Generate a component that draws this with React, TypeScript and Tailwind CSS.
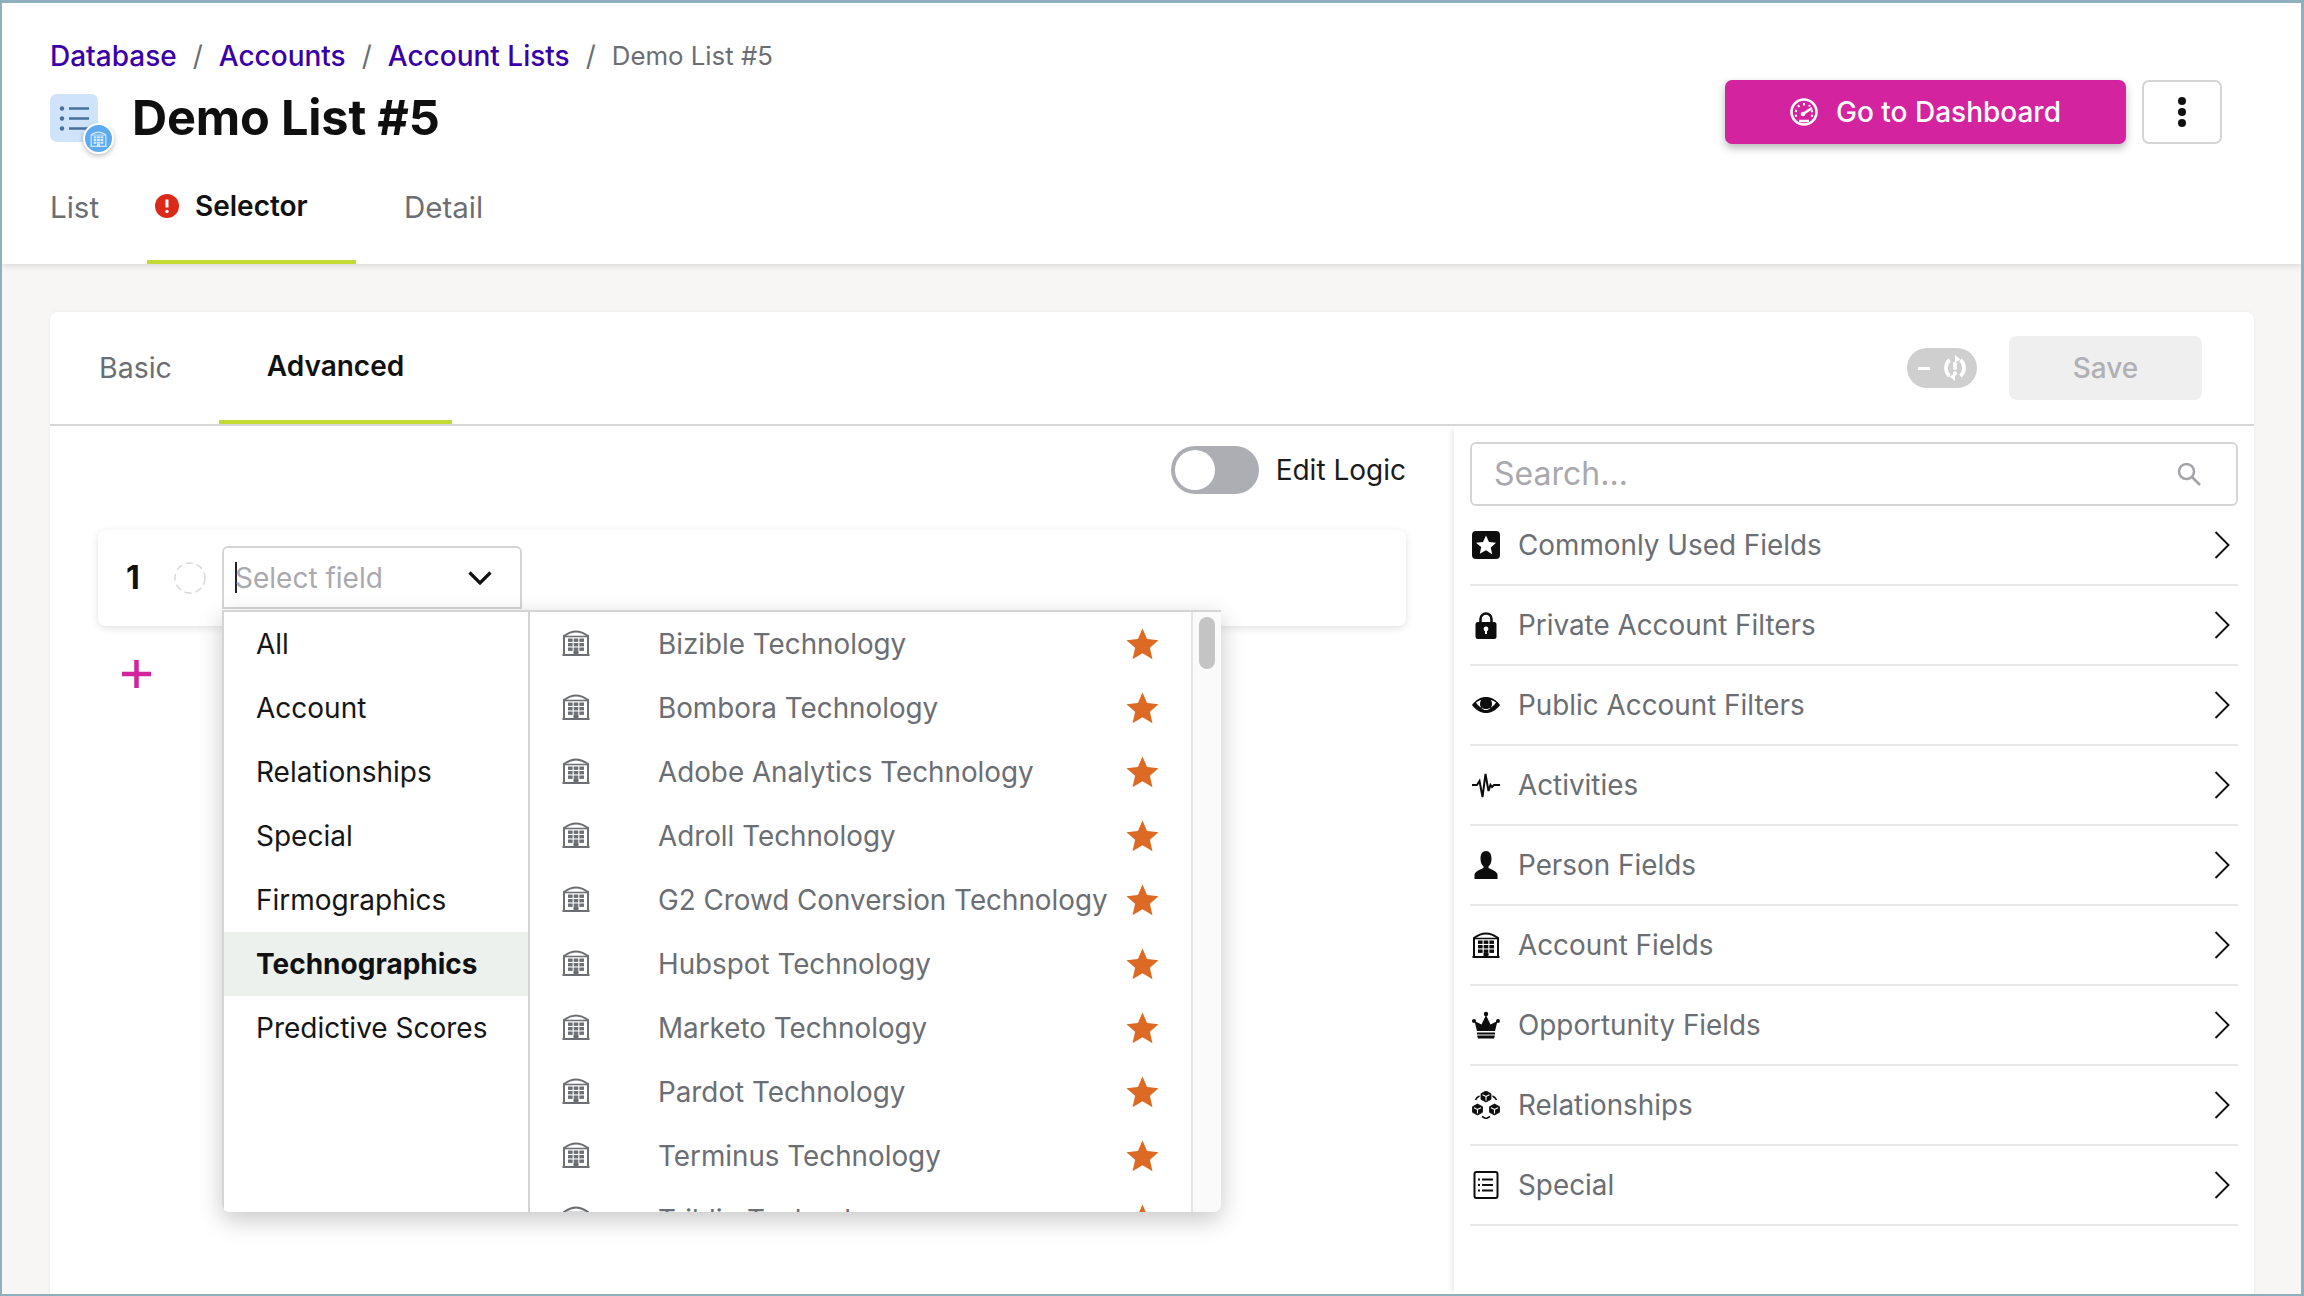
import React from "react";

const Building = ({ className = "" }: { className?: string }) => (
  <svg viewBox="0 0 28 26" className={className} fill="none">
    <path d="M2 25V6C6 3 10 1.500 14 1.500S22 3 26 6V25" stroke="currentColor" strokeWidth="2" />
    <path d="M0.500 25h27" stroke="currentColor" strokeWidth="2" />
    <path d="M2 6.500h24" stroke="currentColor" strokeWidth="1.500" />
    {[8.500, 13, 17.500].map((y) =>
      [6, 11.700, 17.400].map((x) => <rect key={`${x}-${y}`} x={x} y={y} width="4.600" height="3.400" fill="currentColor" />)
    )}
    <rect x="11.500" y="21" width="5" height="4" fill="currentColor" />
  </svg>
);

const Star = () => (
  <svg viewBox="0 0 33 32" className="w-[33px] h-[32px] text-[#dc6a24]" fill="currentColor">
    <path d="M16.500 0.500l4.600 10.600 11.400 1.100-8.600 7.600 2.600 11.400-10-6-10 6 2.600-11.400L0.500 12.200l11.400-1.100z" />
  </svg>
);

const Chevron = () => (
  <svg viewBox="0 0 16 28" className="w-[16px] h-[28px]" fill="none" stroke="#111" strokeWidth="1.900">
    <path d="M1.500 1l13 13-13 13" />
  </svg>
);

const icons: Record<string, React.ReactNode> = {
  star: (
    <svg viewBox="0 0 28 28" className="w-[28px] h-[28px]">
      <rect width="28" height="28" rx="4" fill="#0d0d0d" />
      <path d="M14 4.500l3 6.400 7 .8-5.200 4.700 1.400 6.900L14 19.200l-6.200 3.600 1.400-6.900L4 11.700l7-.8z" fill="#fff" />
    </svg>
  ),
  lock: (
    <svg viewBox="0 0 28 28" className="w-[28px] h-[28px]">
      <path d="M8.500 13V8a5.500 5.500 0 0 1 11 0v5" fill="none" stroke="#0d0d0d" strokeWidth="2.600" />
      <rect x="3.500" y="11" width="21" height="17" rx="2.500" fill="#0d0d0d" />
      <circle cx="14" cy="18" r="2.400" fill="#fff" />
      <rect x="13" y="18" width="2" height="5" fill="#fff" />
    </svg>
  ),
  eye: (
    <svg viewBox="0 0 28 28" className="w-[28px] h-[28px]">
      <path d="M0 14C4 8.500 9 6 14 6s10 2.500 14 8c-4 5.500-9 8-14 8S4 19.500 0 14z" fill="#0d0d0d" />
      <path d="M4 11.500C7 9.500 9 9 9 9c-.7 1.300-1 2.800-1 4 0 3.300 2.700 6 6 6s6-2.700 6-6c0-1.200-.3-2.700-1-4 0 0 2 .5 5 2.500-2.500 4-6.500 6.500-10 6.500S6.500 15.500 4 11.500z" fill="#fff" />
    </svg>
  ),
  pulse: (
    <svg viewBox="0 0 28 28" className="w-[28px] h-[28px]" fill="none" stroke="#0d0d0d" strokeWidth="2">
      <path d="M0 14h5l2.500-4 3 16 3-23 3 17 2-6 1.500 2 2-2H28" />
    </svg>
  ),
  person: (
    <svg viewBox="0 0 28 28" className="w-[28px] h-[28px]">
      <path d="M14 0c3.500 0 5.500 3 5.500 7.500 0 3.500-1 6.500-3 8v1.500c3 1.500 8 3 9 6.500V28h-23v-4.500c1-3.500 6-5 9-6.500v-1.500c-2-1.500-3-4.500-3-8C8.500 3 10.500 0 14 0z" fill="#0d0d0d" />
    </svg>
  ),
  building: <Building className="w-[28px] h-[26px] text-[#0d0d0d]" />,
  crown: (
    <svg viewBox="0 0 28 28" className="w-[28px] h-[28px]" fill="#0d0d0d">
      <circle cx="14" cy="3" r="2.200" />
      <circle cx="2" cy="10" r="2" />
      <circle cx="26" cy="10" r="2" />
      <path d="M14 4l4.500 9.500L25.500 10 23 20H5L2.500 10l7 3.500z" />
      <rect x="5" y="21.500" width="18" height="2" />
      <path d="M5 24.500h18l-1 3H6z" />
    </svg>
  ),
  cubes: (
    <svg viewBox="0 0 28 28" className="w-[28px] h-[28px]" fill="none" stroke="#0d0d0d" strokeWidth="2">
      {[
        [14, 5.500],
        [5.500, 18.500],
        [22.500, 18.500],
      ].map(([x, y]) => (
        <g key={x}>
          <path d={`M${x} ${y - 5.500}l5 2.700v5.600l-5 2.700-5-2.700v-5.600z`} fill="#0d0d0d" stroke="#0d0d0d" strokeWidth="0.800" />
          <path d={`M${x - 3.500} ${y - 1.800}l3.500 1.800 3.500-1.800M${x} ${y}v4`} stroke="#fff" strokeWidth="1.100" />
        </g>
      ))}
      <path d="M20.500 5c2 .8 3.200 2 4 4M7.500 5C5.500 5.800 4.300 7 3.500 9M10 25.500l4 2.200 4-2.200" strokeWidth="1.600" />
    </svg>
  ),
  list: (
    <svg viewBox="0 0 28 28" className="w-[28px] h-[28px]" fill="none" stroke="#0d0d0d">
      <rect x="2.500" y="1" width="23" height="26" rx="2" strokeWidth="2" />
      <path d="M10 8.500h11M10 14h11M10 19.500h11" strokeWidth="2" />
      <path d="M6 8.500h2M6 14h2M6 19.500h2" strokeWidth="2" />
    </svg>
  ),
};

const rows = [
  ["star", "Commonly Used Fields"],
  ["lock", "Private Account Filters"],
  ["eye", "Public Account Filters"],
  ["pulse", "Activities"],
  ["person", "Person Fields"],
  ["building", "Account Fields"],
  ["crown", "Opportunity Fields"],
  ["cubes", "Relationships"],
  ["list", "Special"],
];

const categories = ["All", "Account", "Relationships", "Special", "Firmographics", "Technographics", "Predictive Scores"];
const techs = [
  "Bizible Technology",
  "Bombora Technology",
  "Adobe Analytics Technology",
  "Adroll Technology",
  "G2 Crowd Conversion Technology",
  "Hubspot Technology",
  "Marketo Technology",
  "Pardot Technology",
  "Terminus Technology",
  "Triblio Technology",
];

const Sep = () => <span className="mx-[16px] text-[#6b6e72] font-normal">/</span>;

export default function App() {
  return (
    <div className="w-[2304px] h-[1296px] overflow-hidden flex flex-col bg-[#f7f6f4] border-t-[3px] border-l-[2px] border-r-[3px] border-b-[2px] border-[#8fb0bd] font-['Inter',sans-serif] text-[28px]">
      <header className="h-[261px] shrink-0 bg-white shadow-[0_2px_6px_rgba(0,0,0,0.12)] pl-[48px] pr-[79px] flex justify-between relative z-10">
        <div className="flex flex-col">
          <nav className="flex items-center h-[34px] mt-[36px] text-[28px] leading-[34px] font-medium">
            <span className="text-[#3a00a8]">Database</span>
            <Sep />
            <span className="text-[#3a00a8]">Accounts</span>
            <Sep />
            <span className="text-[#3a00a8]">Account Lists</span>
            <Sep />
            <span className="text-[#6b6e72] text-[25.800px] font-normal">Demo List #5</span>
          </nav>
          <div className="flex items-center mt-[21px] h-[48px]">
            <div className="relative w-[48px] h-[48px] rounded-[7px] bg-[#cfe4fa] mr-[34px]">
              <svg viewBox="0 0 48 48" className="w-[48px] h-[48px]" fill="#46709b" stroke="#46709b">
                <circle cx="12" cy="14.500" r="2.200" stroke="none" />
                <circle cx="12" cy="24.500" r="2.200" stroke="none" />
                <circle cx="12" cy="34.500" r="2.200" stroke="none" />
                <path d="M19 14.500h20M19 24.500h20M19 34.500h20" strokeWidth="2.400" />
              </svg>
              <div className="absolute left-[33px] top-[29px] w-[31px] h-[31px] rounded-full bg-[#5eaaee] border-[2px] border-white shadow-[0_2px_5px_rgba(0,0,0,0.25)] flex items-center justify-center">
                <Building className="w-[17px] h-[16px] text-[#d7e9fb]" />
              </div>
            </div>
            <h1 className="text-[48.700px] leading-[48px] font-bold text-[#0f0f0f] tracking-[-0.2px]">Demo List #5</h1>
          </div>
          <div className="flex flex-1 mt-[18px]">
            <div className="w-[97px] pt-[30px] leading-[34px] text-[#6b6e72] text-[29.500px]">List</div>
            <div className="w-[209px] flex items-start pl-[8px] pt-[29px] border-b-[4px] border-[#c4db33]">
              <svg viewBox="0 0 24 24" className="w-[24px] h-[24px] mt-[5px] mr-[16px]">
                <circle cx="12" cy="12" r="12" fill="#dc2a1a" />
                <path d="M12 5.500v8" stroke="#fff" strokeWidth="3" />
                <circle cx="12" cy="17.500" r="1.700" fill="#fff" />
              </svg>
              <span className="font-semibold text-[#111] leading-[34px]">Selector</span>
            </div>
            <div className="ml-[48px] pt-[30px] leading-[34px] text-[#6b6e72] text-[29.500px]">Detail</div>
          </div>
        </div>
        <div className="flex gap-[16px] mt-[77px] items-start">
          <button className="w-[401px] h-[64px] rounded-[7px] bg-[#d4239f] shadow-[0_4px_8px_rgba(0,0,0,0.28)] text-white font-medium flex items-center justify-center gap-[18px]">
            <svg viewBox="0 0 28 28" className="w-[28px] h-[28px]" fill="none" stroke="#fff">
              <circle cx="14" cy="14" r="12.500" strokeWidth="2.600" />
              <path d="M13 16l9-6" strokeWidth="2.600" />
              <circle cx="13" cy="16" r="2.300" fill="#fff" stroke="none" />
              <path d="M14 5v2.500M8 7l1.300 2M20 7l-1 1.500M5 12.500l2 .7M23 13l-2 .5M5 18l2-.5M23 18l-2-.5" strokeWidth="2" />
              <path d="M9 23h10" strokeWidth="2.500" />
            </svg>
            <span>Go to Dashboard</span>
          </button>
          <button className="w-[80px] h-[64px] rounded-[7px] border-[2px] border-[#d5d5d5] bg-white flex flex-col items-center justify-center gap-[3px]">
            <span className="w-[8px] h-[8px] rounded-full bg-[#111]" />
            <span className="w-[8px] h-[8px] rounded-full bg-[#111]" />
            <span className="w-[8px] h-[8px] rounded-full bg-[#111]" />
          </button>
        </div>
      </header>

      <main className="flex-1 min-h-0 flex pt-[48px] pl-[48px] pr-[47px]">
        <section className="flex-1 rounded-t-[8px] bg-white flex flex-col shadow-[0_0_4px_rgba(0,0,0,0.05)]">
          <div className="h-[114px] shrink-0 border-b-[2px] border-[#d6d6d6] flex items-start relative">
            <div className="pl-[49px] pt-[39px] w-[169px] leading-[34px] text-[#6b6e72] text-[28.500px]">Basic</div>
            <div className="w-[233px] h-[112px] pt-[37px] text-center border-b-[4px] border-[#c4db33] leading-[34px] font-semibold text-[#111]">
              Advanced
            </div>
            <div className="ml-auto mr-[52px] mt-[24px] flex items-center gap-[32px]">
              <div className="w-[70px] h-[40px] rounded-full bg-[#cfcfcf] flex items-center justify-between pl-[11px] pr-[9px]">
                <span className="w-[12px] h-[3px] bg-white" />
                <svg viewBox="0 0 24 26" className="w-[26px] h-[28px]" fill="none" stroke="#fff" strokeWidth="3.400">
                  <path d="M7 5.500A10 10 0 0 0 7 20.500M17 5.500A10 10 0 0 1 17 20.500" />
                  <path d="M12 1l5 4-5 3zM12 25l-5-4 5-3z" fill="#fff" stroke="none" />
                  <path d="M12 7.500v7" strokeWidth="3.400" />
                  <circle cx="12" cy="18" r="1.900" fill="#fff" stroke="none" />
                </svg>
              </div>
              <button className="w-[193px] h-[64px] rounded-[8px] bg-[#efefef] text-[#b0b0b5] font-medium">Save</button>
            </div>
          </div>

          <div className="flex-1 min-h-0 flex">
            <div className="flex-1 min-w-0 flex flex-col">
              <div className="flex justify-end items-center pr-[48px] pt-[20px] h-[68px]">
                <div className="w-[88px] h-[48px] rounded-full bg-[#adaeb3] flex items-center pl-[4px]">
                  <span className="w-[40px] h-[40px] rounded-full bg-white" />
                </div>
                <span className="ml-[17px] text-[#1b1b1b]">Edit Logic</span>
              </div>
              <div className="mx-[48px] mt-[36px] h-[96px] rounded-[8px] bg-white shadow-[0_2px_8px_rgba(0,0,0,0.12)] flex items-start relative">
                <span className="ml-[28px] mt-[29px] text-[32px] leading-[38px] font-bold text-[#111] w-[48px]">1</span>
                <svg viewBox="0 0 32 32" className="w-[32px] h-[32px] mt-[32px]" fill="none" stroke="#d9d9d9" strokeWidth="1.500" strokeDasharray="7 4">
                  <circle cx="16" cy="16" r="15" />
                </svg>
                <div className="relative ml-[16px] mt-[16px] w-[300px] h-[63px] rounded-t-[6px] border-[2px] border-[#d5d5d5] flex items-center pl-[11px] pr-[28px]">
                  <span className="w-[2px] h-[31px] bg-[#222]" />
                  <span className="flex-1 text-[#a9a9ae] ml-[-2px]">Select field</span>
                  <svg viewBox="0 0 24 14" className="w-[24px] h-[14px]" fill="none" stroke="#111" strokeWidth="3.200">
                    <path d="M1.500 1.500L12 12 22.500 1.500" />
                  </svg>
                  <div className="absolute left-[-2px] top-[62px] w-[999px] h-[602px] z-20 bg-white border-t-[2px] border-[#d5d5d5] rounded-b-[8px] shadow-[0_8px_24px_rgba(0,0,0,0.22)] overflow-hidden flex">
                    <div className="w-[308px] shrink-0 border-r-[2px] border-[#d5d5d5] border-l-[2px] flex flex-col">
                      {categories.map((c) => (
                        <div
                          key={c}
                          className={
                            c === "Technographics"
                              ? "h-[64px] shrink-0 flex items-center pl-[32px] bg-[#edf1ee] font-bold text-[#111]"
                              : "h-[64px] shrink-0 flex items-center pl-[32px] text-[#161616]"
                          }
                        >
                          {c}
                        </div>
                      ))}
                    </div>
                    <div className="flex-1 min-w-0 flex flex-col">
                      {techs.map((t) => (
                        <div key={t} className="h-[64px] shrink-0 flex items-center pl-[32px] pr-[32px] text-[#6b6e72]">
                          <Building className="w-[28px] h-[26px] shrink-0 mt-[-3px] text-[#6b6e72]" />
                          <span className="ml-[68px] flex-1 whitespace-nowrap text-[27.800px] pt-[2px]">{t}</span>
                          <Star />
                        </div>
                      ))}
                    </div>
                    <div className="w-[30px] shrink-0 bg-[#fafafa] border-l-[2px] border-[#e6e6e6] pt-[5px] pl-[6px]">
                      <div className="w-[16px] h-[52px] rounded-full bg-[#c4c4c4]" />
                    </div>
                  </div>
                </div>
              </div>
              <div className="ml-[72px] mt-[34px]">
                <svg viewBox="0 0 29 28" className="w-[29px] h-[28px]" stroke="#d4239f" strokeWidth="4.500">
                  <path d="M14.500 0v28M0 14h29" />
                </svg>
              </div>
            </div>

            <aside className="w-[800px] shrink-0 px-[16px] pt-[16px] shadow-[-4px_0_6px_-2px_rgba(0,0,0,0.1)]">
              <div className="h-[64px] rounded-[6px] border-[2px] border-[#d5d5d5] flex items-center justify-between pl-[22px] pr-[35px]">
                <span className="text-[32px] text-[#a9a9ae]">Search...</span>
                <svg viewBox="0 0 24 24" className="w-[24px] h-[24px]" fill="none" stroke="#a3a3a8" strokeWidth="2.500">
                  <circle cx="9.500" cy="9.500" r="7.500" />
                  <path d="M15 15l8 8" />
                </svg>
              </div>
              {rows.map(([icon, label]) => (
                <div key={label} className="h-[80px] border-b-[2px] border-[#e8e8e8] flex items-center pl-[2px] pr-[8px]">
                  <span className="w-[28px] h-[28px] flex items-center justify-center shrink-0">{icons[icon]}</span>
                  <span className="ml-[18px] flex-1 text-[#6b6e72] text-[27.850px] pt-[2px]">{label}</span>
                  <Chevron />
                </div>
              ))}
            </aside>
          </div>
        </section>
      </main>
    </div>
  );
}
